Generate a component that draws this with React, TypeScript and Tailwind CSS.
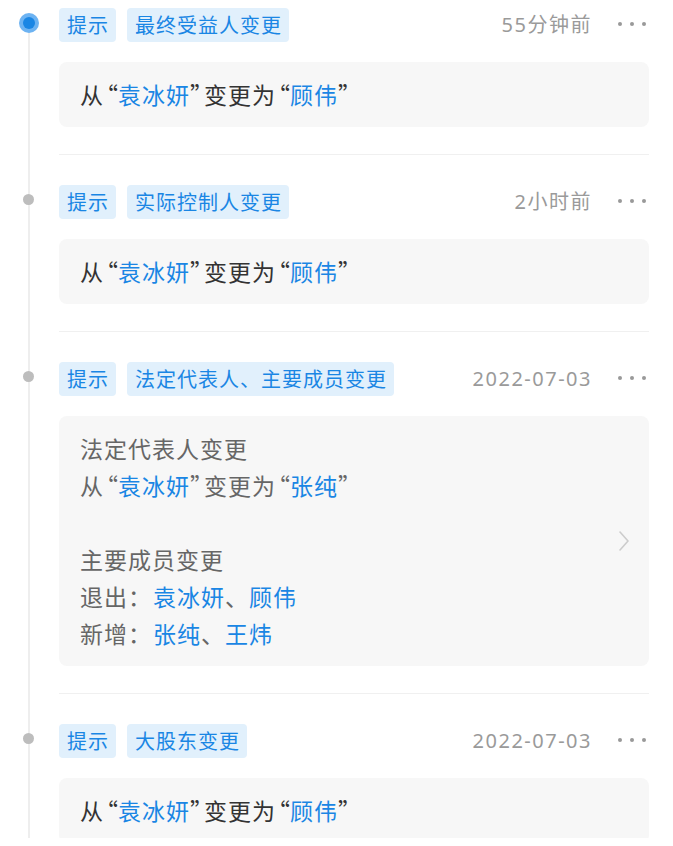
import React from 'react';

const FONT = { fontFamily: '"Noto Sans CJK SC", "Noto Sans", sans-serif' };

interface TimelineItemProps {
  first?: boolean;
  tag: string;
  time: string;
  children: React.ReactNode;
  arrow?: boolean;
}

const Blue: React.FC<{ children: React.ReactNode }> = ({ children }) => (
  <span className="text-[#1a86e4]">{children}</span>
);

// half-width quotes, the CJK full-width ones are too wide
const Q: React.FC<{ c: string }> = ({ c }) => (
  <span className={`inline-block w-[14px] tracking-normal [font-feature-settings:'halt'] ${c === '“' ? 'text-right' : 'text-left'}`}>
    {c}
  </span>
);

const Line: React.FC<{ children: React.ReactNode }> = ({ children }) => (
  <div className="h-[37px] overflow-hidden">{children}</div>
);

const Change: React.FC<{ from: string; to: string }> = ({ from, to }) => (
  <Line>
    从<Q c="“" />
    <Blue>{from}</Blue>
    <Q c="”" />变更为<Q c="“" />
    <Blue>{to}</Blue>
    <Q c="”" />
  </Line>
);

const TimelineItem: React.FC<TimelineItemProps> = ({ first, tag, time, children, arrow }) => {
  return (
    <div className="flex">
      {/* left rail */}
      <div className="relative w-[59px] shrink-0">
        <div
          className={`absolute left-[28px] bottom-0 w-[2px] bg-[#eeeeee] ${first ? 'top-[24px]' : 'top-0'}`}
        />
        {first ? (
          <div className="absolute left-[19px] top-[13px] flex h-[20px] w-[20px] items-center justify-center rounded-full bg-[#6db3f2]">
            <div className="h-[12px] w-[12px] rounded-full bg-[#1a86e4]" />
          </div>
        ) : (
          <div className="absolute left-[23px] top-[39px] h-[11px] w-[11px] rounded-full bg-[#bdbdbd]" />
        )}
      </div>

      {/* content */}
      <div className={`mr-[24px] flex-1 border-b border-[#f0f0f0] pb-[27px] ${first ? 'pt-[8px]' : 'pt-[30px]'}`}>
        <div className="flex h-[34px] items-center">
          <span className="flex h-[34px] items-center rounded-[4px] bg-[#e1f0fc] pl-[8px] pr-[7px] text-[20px] tracking-[1px] text-[#1a86e4]">
            提示
          </span>
          <span className="ml-[11px] flex h-[34px] items-center rounded-[4px] bg-[#e1f0fc] pl-[8px] pr-[7px] text-[20px] tracking-[1px] text-[#1a86e4]">
            {tag}
          </span>
          <span
            className="ml-auto text-[20px] tracking-[1.5px] text-[#9a9a9a]"
            style={{ fontFamily: '"Noto Sans", "Noto Sans CJK SC", sans-serif' }}
          >
            {time}
          </span>
          <div className="ml-[26px] mr-[3px] flex items-center gap-[8px] pb-[2px]">
            <span className="h-[4px] w-[4px] rounded-full bg-[#999999]" />
            <span className="h-[4px] w-[4px] rounded-full bg-[#999999]" />
            <span className="h-[4px] w-[4px] rounded-full bg-[#999999]" />
          </div>
        </div>
        <div className="mt-[20px] flex items-center rounded-[8px] bg-[#f7f7f7] px-[21px] py-[14px]">
          <div className="flex-1 text-[23px] leading-[37px] tracking-[1px]">{children}</div>
          {arrow && (
            <svg width="12" height="22" viewBox="0 0 12 22" fill="none" className="mr-[-2px]">
              <path d="M2 2 L10 11 L2 20" stroke="#cccccc" strokeWidth="1.6" strokeLinecap="round" strokeLinejoin="round" />
            </svg>
          )}
        </div>
      </div>
    </div>
  );
};

export default function App() {
  return (
    <div className="h-[846px] w-[673px] bg-white" style={FONT}>
      <div className="h-[838px] overflow-hidden">
        <TimelineItem first tag="最终受益人变更" time="55分钟前">
          <div className="text-[#333333]">
            <Change from="袁冰妍" to="顾伟" />
          </div>
        </TimelineItem>

        <TimelineItem tag="实际控制人变更" time="2小时前">
          <div className="text-[#333333]">
            <Change from="袁冰妍" to="顾伟" />
          </div>
        </TimelineItem>

        <TimelineItem tag="法定代表人、主要成员变更" time="2022-07-03" arrow>
          <div className="text-[#666666]">
            <Line>法定代表人变更</Line>
            <Change from="袁冰妍" to="张纯" />
            <div className="h-[37px]" />
            <Line>主要成员变更</Line>
            <Line>
              退出：<span className="ml-[1px]" />
              <Blue>袁冰妍</Blue>、<Blue>顾伟</Blue>
            </Line>
            <Line>
              新增：<span className="ml-[1px]" />
              <Blue>张纯</Blue>、<Blue>王炜</Blue>
            </Line>
          </div>
        </TimelineItem>

        <TimelineItem tag="大股东变更" time="2022-07-03">
          <div className="text-[#333333]">
            <Change from="袁冰妍" to="顾伟" />
          </div>
        </TimelineItem>
      </div>
    </div>
  );
}
